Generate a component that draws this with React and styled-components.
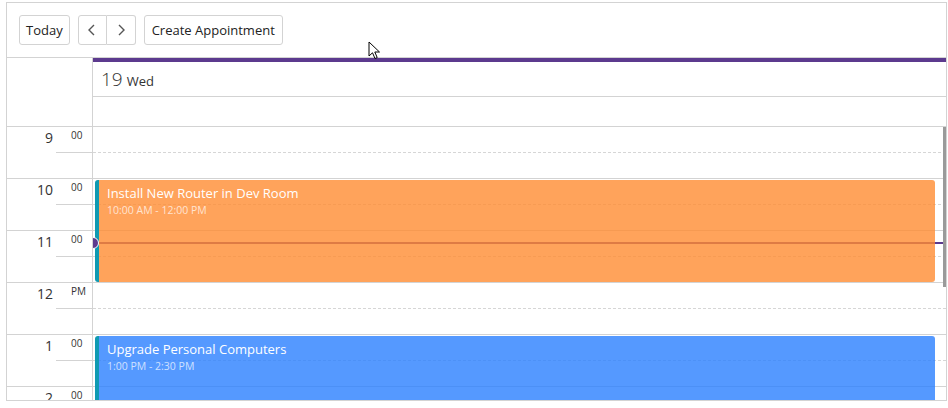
import React from "react";
import styled, { createGlobalStyle } from "styled-components";

const GlobalStyle = createGlobalStyle`
  html, body { margin: 0; padding: 0; background: #fff; }
  body { font-family: "Open Sans", "Noto Sans", sans-serif; color: #333; }
  * { box-sizing: border-box; }
`;

const SLOT = 26; // half hour incl. border
const HOUR = SLOT * 2;
const START_HOUR = 9;

const hours = [
  { h: "9", m: "00" },
  { h: "10", m: "00" },
  { h: "11", m: "00" },
  { h: "12", m: "PM" },
  { h: "1", m: "00" },
  { h: "2", m: "00" },
];

const appointments = [
  { title: "Install New Router in Dev Room", time: "10:00 AM - 12:00 PM", start: 10, end: 12, color: "rgba(255, 140, 50, 0.8)" },
  { title: "Upgrade Personal Computers", time: "1:00 PM - 2:30 PM", start: 13, end: 14.5, color: "rgba(42, 127, 255, 0.8)" },
];

const nowHour = 11.22;

const Frame = styled.div`
  position: relative;
  margin: 2px 1px 0 6px;
  height: 399px;
  border: 1px solid #d3d3d3;
  display: flex;
  flex-direction: column;
  overflow: hidden;
`;

const Toolbar = styled.div`
  height: 55px;
  flex: none;
  display: flex;
  align-items: flex-start;
  gap: 8px;
  padding: 12px 12px 0;
  border-bottom: 1px solid #d3d3d3;
`;

const Button = styled.button`
  height: 30px;
  padding: 0 ${(p) => (p.$icon ? "0" : p.$pad || "5px")};
  width: ${(p) => (p.$icon ? "29px" : "auto")};
  display: flex;
  align-items: center;
  justify-content: center;
  background: #fff;
  border: 1px solid #d3d3d3;
  border-radius: 3px;
  font-family: inherit;
  font-size: 13px;
  color: #222;
  cursor: pointer;
`;

const ButtonGroup = styled.div`
  display: flex;
  ${Button} {
    border-radius: 0;
  }
  ${Button}:first-child {
    border-radius: 3px 0 0 3px;
  }
  ${Button}:last-child {
    border-radius: 0 3px 3px 0;
    border-left: none;
  }
`;

const Body = styled.div`
  flex: 1;
  display: flex;
  min-height: 0;
`;

const Gutter = styled.div`
  width: 86px;
  flex: none;
  border-right: 1px solid #d3d3d3;
  display: flex;
  flex-direction: column;
`;

const GutterHead = styled.div`
  height: 69px;
  flex: none;
  border-bottom: 1px solid #d3d3d3;
`;

const HourLabel = styled.div`
  height: ${HOUR}px;
  flex: none;
  display: grid;
  grid-template-columns: 49px 1fr;
  grid-template-rows: ${SLOT}px ${SLOT}px;
  border-bottom: 1px solid #d3d3d3;
`;

const HourNum = styled.div`
  grid-row: 1 / 3;
  text-align: right;
  font-size: 14px;
  line-height: 16px;
  padding: 3px 3px 0 0;
  color: #333;
`;

const HourMin = styled.div`
  font-size: 10px;
  line-height: 12px;
  padding: 2px 0 0 15px;
  color: #333;
  border-bottom: 1px solid #d3d3d3;
`;

const DayColumn = styled.div`
  flex: 1;
  display: flex;
  flex-direction: column;
  min-width: 0;
`;

const DayHead = styled.div`
  flex: none;
  border-top: 4px solid #5c3a8e;
`;

const DateRow = styled.div`
  height: 35px;
  display: flex;
  align-items: baseline;
  gap: 4px;
  padding: 4px 0 0 8px;
  border-bottom: 1px solid #d3d3d3;
`;

const DateNum = styled.span`
  font-size: 19px;
  font-weight: 300;
  color: #333;
`;

const DateDay = styled.span`
  font-size: 13px;
  color: #333;
`;

const AllDayRow = styled.div`
  height: 30px;
  border-bottom: 1px solid #d3d3d3;
`;

const TimeArea = styled.div`
  position: relative;
  flex: 1;
  overflow: hidden;
`;

const Slot = styled.div`
  height: ${SLOT}px;
  border-bottom: 1px ${(p) => (p.$half ? "dashed #d6d6d6" : "solid #d3d3d3")};
`;

const NowLine = styled.div`
  position: absolute;
  left: 0;
  right: 0;
  height: 2px;
  background: #5c3a8e;
`;

const NowDot = styled.div`
  position: absolute;
  left: -6px;
  width: 12px;
  height: 12px;
  border-radius: 50%;
  background: #5c3a8e;
  border: 1.5px solid #fff;
  z-index: 3;
`;

const Appointment = styled.div`
  position: absolute;
  left: 2px;
  right: 11px;
  background: ${(p) => p.$color};
  border-left: 4px solid #0f9ab2;
  border-radius: 3px;
  padding: 4px 8px;
  color: #fff;
  z-index: 2;
`;

const ApptTitle = styled.div`
  font-size: 13px;
  line-height: 18px;
`;

const ApptTime = styled.div`
  font-size: 10.5px;
  line-height: 16px;
  color: rgba(255, 255, 255, 0.72);
`;

const Scrollbar = styled.div`
  position: absolute;
  top: 0;
  right: 0;
  width: 3px;
  height: 160px;
  background: #9a9a9a;
  z-index: 4;
`;

const Cursor = styled.svg`
  position: absolute;
  left: 361px;
  top: 38px;
  z-index: 10;
`;

const Chevron = ({ dir }) => (
  <svg width="14" height="14" viewBox="0 0 14 14" fill="none" stroke="#555" strokeWidth="1.4">
    {dir === "left" ? <path d="M9 2 L4 7 L9 12" /> : <path d="M5 2 L10 7 L5 12" />}
  </svg>
);

export default function App() {
  const offset = (h) => (h - START_HOUR) * HOUR;
  return (
    <>
      <GlobalStyle />
      <Frame>
        <Toolbar>
          <Button $pad="6px">Today</Button>
          <ButtonGroup>
            <Button $icon aria-label="Previous"><Chevron dir="left" /></Button>
            <Button $icon aria-label="Next"><Chevron dir="right" /></Button>
          </ButtonGroup>
          <Button $pad="7px">Create Appointment</Button>
        </Toolbar>
        <Body>
          <Gutter>
            <GutterHead />
            {hours.map((hr) => (
              <HourLabel key={hr.h}>
                <HourNum>{hr.h}</HourNum>
                <HourMin>{hr.m}</HourMin>
              </HourLabel>
            ))}
          </Gutter>
          <DayColumn>
            <DayHead>
              <DateRow>
                <DateNum>19</DateNum>
                <DateDay>Wed</DateDay>
              </DateRow>
              <AllDayRow />
            </DayHead>
            <TimeArea>
              {hours.map((hr) => (
                <React.Fragment key={hr.h}>
                  <Slot $half />
                  <Slot />
                </React.Fragment>
              ))}
              <NowLine style={{ top: offset(nowHour) }} />
              <NowDot style={{ top: offset(nowHour) - 5 }} />
              {appointments.map((a) => (
                <Appointment
                  key={a.title}
                  $color={a.color}
                  style={{ top: offset(a.start) + 1, height: (a.end - a.start) * HOUR - 2 }}
                >
                  <ApptTitle>{a.title}</ApptTitle>
                  <ApptTime>{a.time}</ApptTime>
                </Appointment>
              ))}
              <Scrollbar />
            </TimeArea>
          </DayColumn>
        </Body>
        <Cursor width="14" height="20" viewBox="0 0 14 20">
          <path d="M1 1 L1 15 L4.5 11.8 L7 17.5 L9.2 16.5 L6.8 11 L11.5 11 Z" fill="#fff" stroke="#000" strokeWidth="1" strokeLinejoin="round" />
        </Cursor>
      </Frame>
    </>
  );
}
